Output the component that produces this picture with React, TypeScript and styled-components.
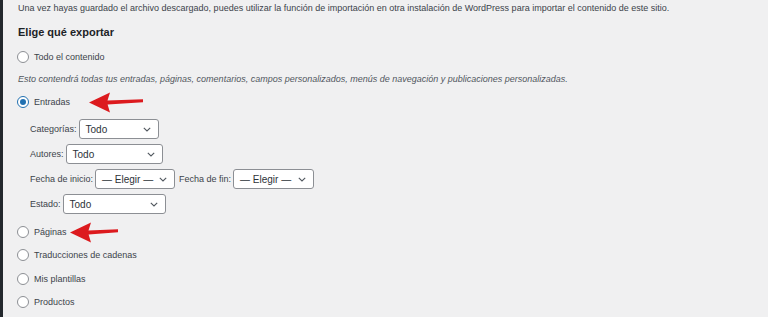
import React from "react";
import styled, { createGlobalStyle } from "styled-components";

const Global = createGlobalStyle`
  html, body { margin: 0; padding: 0; background: #f0f0f1; }
  body { font-family: "Liberation Sans", Arial, sans-serif; color: #3c434a; }
  #root { min-height: 317px; }
`;

const Page = styled.div`
  display: flex;
  height: 317px;
  overflow: hidden;
  background: #f0f0f1;
`;

const SideStrip = styled.div`
  width: 3px;
  flex: none;
  background: #23282d;
`;

const Content = styled.main`
  flex: 1;
  padding-left: 15px;
  display: flex;
  flex-direction: column;
`;

const Intro = styled.p`
  margin: 0;
  height: 16px;
  line-height: 16px;
  font-size: 9px;
  color: #3c434a;
  white-space: nowrap;
`;

const Heading = styled.h2`
  margin: 8px 0 0;
  height: 16px;
  line-height: 16px;
  font-size: 11px;
  font-weight: 700;
  color: #1d2327;
`;

const RadioRow = styled.label<{ $mt: number }>`
  position: relative;
  display: flex;
  align-items: center;
  gap: 5px;
  height: 16px;
  margin-top: ${(p) => p.$mt}px;
  font-size: 9px;
  color: #3c434a;
`;

const RadioCircle = styled.span<{ $checked?: boolean }>`
  box-sizing: border-box;
  width: 12px;
  height: 12px;
  margin-left: -1px;
  border-radius: 50%;
  background: #fff;
  border: 1px solid ${(p) => (p.$checked ? "#2271b1" : "#8c8f94")};
  display: flex;
  align-items: center;
  justify-content: center;
  &::after {
    content: "";
    display: ${(p) => (p.$checked ? "block" : "none")};
    width: 6px;
    height: 6px;
    border-radius: 50%;
    background: #2271b1;
  }
`;

const Description = styled.p`
  margin: 6px 0 0;
  height: 16px;
  line-height: 16px;
  font-size: 9px;
  font-style: italic;
  color: #50575e;
  white-space: nowrap;
`;

const FilterList = styled.div`
  display: flex;
  flex-direction: column;
  gap: 5px;
  margin-top: 9px;
  padding-left: 12px;
`;

const FilterRow = styled.div`
  display: flex;
  align-items: center;
  gap: 2px;
  height: 20px;
  font-size: 9px;
  color: #3c434a;
`;

const FilterLabel = styled.span<{ $gapLeft?: number }>`
  margin-left: ${(p) => p.$gapLeft ?? 0}px;
  white-space: nowrap;
`;

const SelectBox = styled.div<{ $w: number }>`
  box-sizing: border-box;
  width: ${(p) => p.$w}px;
  height: 20px;
  background: #fff;
  border: 1px solid #8c8f94;
  border-radius: 3px;
  display: flex;
  align-items: center;
  justify-content: space-between;
  padding: 0 7px 0 6px;
  font-size: 10px;
  color: #2c3338;
`;

const Chevron = () => (
  <svg width="8" height="5" viewBox="0 0 8 5" aria-hidden>
    <path d="M0.8 0.8 L4 4 L7.2 0.8" fill="none" stroke="#50575e" strokeWidth="1.1" />
  </svg>
);

const ArrowOverlay = styled.svg<{ $left: number; $top: number }>`
  position: absolute;
  left: ${(p) => p.$left}px;
  top: ${(p) => p.$top}px;
  overflow: visible;
  pointer-events: none;
`;

const RedArrow = ({ left, top, len }: { left: number; top: number; len: number }) => (
  <ArrowOverlay $left={left} $top={top} width={len} height={22} viewBox={`0 0 ${len} 22`}>
    <path
      d={`M0 10.5 L21 0.5 L18.5 8.6 L${len} 7.2 L${len} 10.2 L18.6 12.6 L21 20.5 Z`}
      fill="#dc1a1e"
    />
  </ArrowOverlay>
);

const Select = ({ w, value }: { w: number; value: string }) => (
  <SelectBox $w={w}>
    <span>{value}</span>
    <Chevron />
  </SelectBox>
);

const Radio = ({ label, checked, mt, children }: { label: string; checked?: boolean; mt: number; children?: React.ReactNode }) => (
  <RadioRow $mt={mt}>
    <RadioCircle $checked={checked} />
    <span>{label}</span>
    {children}
  </RadioRow>
);

export default function App() {
  return (
    <>
      <Global />
      <Page>
        <SideStrip />
        <Content>
          <Intro>
            Una vez hayas guardado el archivo descargado, puedes utilizar la función de importación en otra instalación de WordPress para importar el contenido de este sitio.
          </Intro>
          <Heading>Elige qué exportar</Heading>
          <Radio label="Todo el contenido" mt={9} />
          <Description>
            Esto contendrá todas tus entradas, páginas, comentarios, campos personalizados, menús de navegación y publicaciones personalizadas.
          </Description>
          <Radio label="Entradas" checked mt={7}>
            <RedArrow left={71} top={-2.5} len={54} />
          </Radio>
          <FilterList>
            <FilterRow>
              <FilterLabel>Categorías:</FilterLabel>
              <Select w={80} value="Todo" />
            </FilterRow>
            <FilterRow>
              <FilterLabel>Autores:</FilterLabel>
              <Select w={97} value="Todo" />
            </FilterRow>
            <FilterRow>
              <FilterLabel>Fecha de inicio:</FilterLabel>
              <Select w={80} value="— Elegir —" />
              <FilterLabel $gapLeft={2}>Fecha de fin:</FilterLabel>
              <Select w={81} value="— Elegir —" />
            </FilterRow>
            <FilterRow>
              <FilterLabel>Estado:</FilterLabel>
              <Select w={103} value="Todo" />
            </FilterRow>
          </FilterList>
          <Radio label="Páginas" mt={10}>
            <RedArrow left={52} top={-2.5} len={48} />
          </Radio>
          <Radio label="Traducciones de cadenas" mt={7} />
          <Radio label="Mis plantillas" mt={8} />
          <Radio label="Productos" mt={7} />
        </Content>
      </Page>
    </>
  );
}
